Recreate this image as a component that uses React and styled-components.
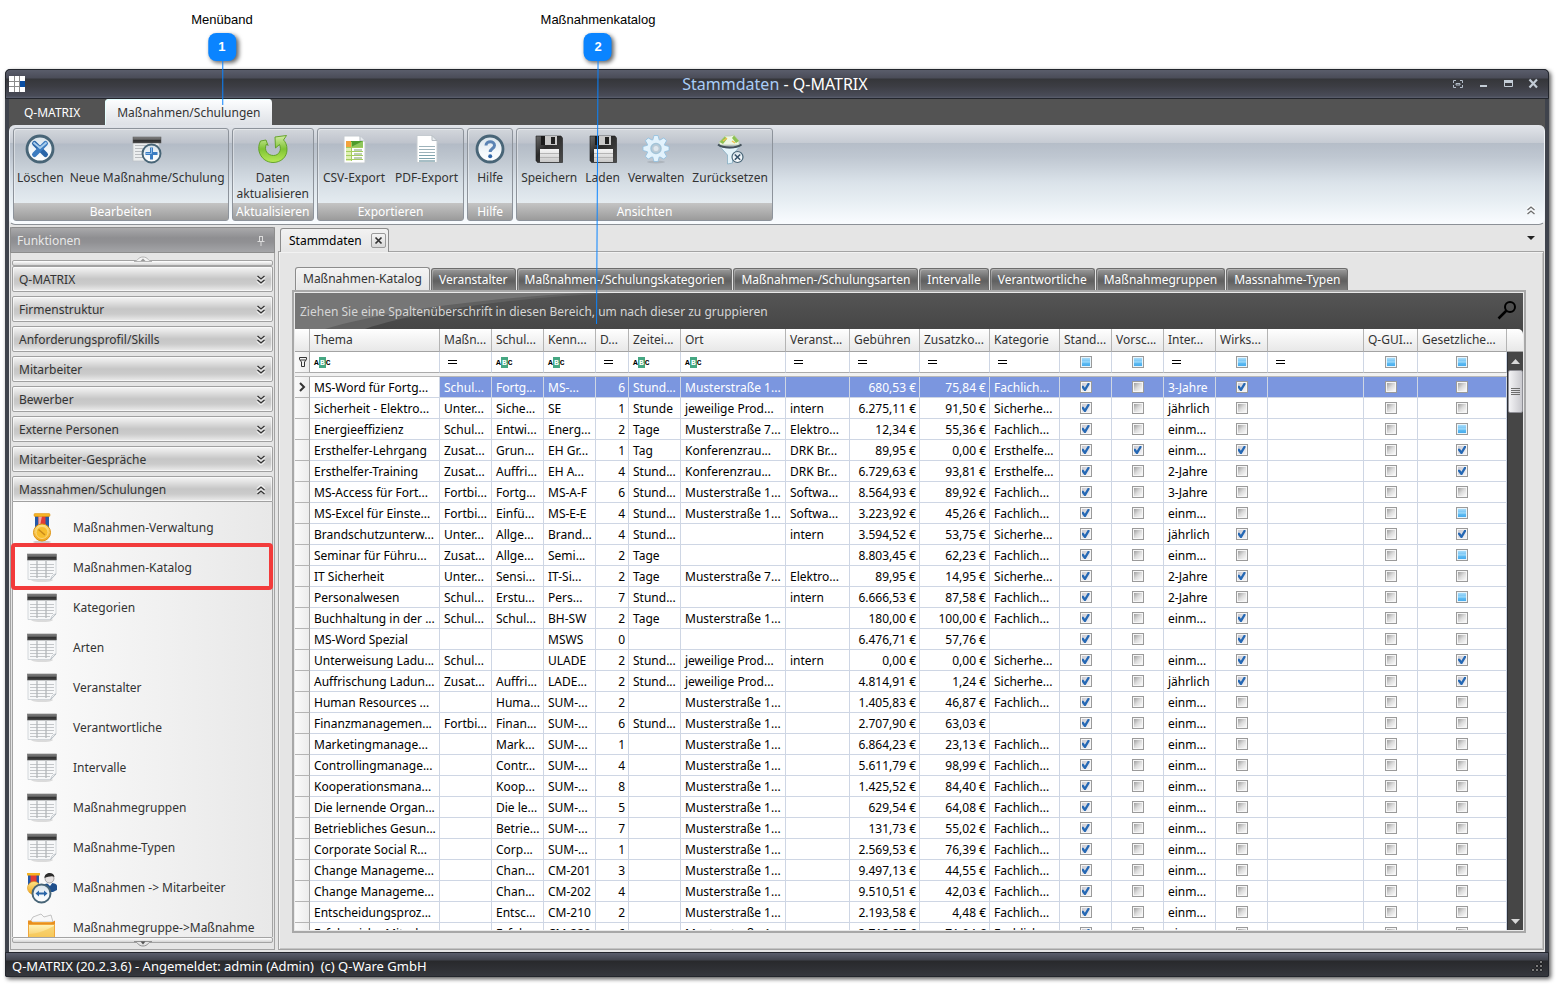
import React from 'react';
import styled, { createGlobalStyle, css } from 'styled-components';

const GlobalStyle = createGlobalStyle`
  *, *::before, *::after { box-sizing: border-box; }

  body {
    margin: 0;
    background: #ffffff;
    color: #333333;
    font-family: 'Noto Sans', 'DejaVu Sans Condensed', sans-serif;
    font-size: 12px;
    line-height: 16px;
  }

  button {
    margin: 0;
    padding: 0;
    border: 0;
    background: none;
    color: inherit;
    font: inherit;
  }
`;

/* ---------- data ---------- */

const menuGroups = [
  'Q-MATRIX',
  'Firmenstruktur',
  'Anforderungsprofil/Skills',
  'Mitarbeiter',
  'Bewerber',
  'Externe Personen',
  'Mitarbeiter-Gespräche',
];

const menuItems = [
  { label: 'Maßnahmen-Verwaltung', icon: 'medal' },
  { label: 'Maßnahmen-Katalog', icon: 'table', active: true },
  { label: 'Kategorien', icon: 'table' },
  { label: 'Arten', icon: 'table' },
  { label: 'Veranstalter', icon: 'table' },
  { label: 'Verantwortliche', icon: 'table' },
  { label: 'Intervalle', icon: 'table' },
  { label: 'Maßnahmegruppen', icon: 'table' },
  { label: 'Maßnahme-Typen', icon: 'table' },
  { label: 'Maßnahmen -> Mitarbeiter', icon: 'assign' },
  { label: 'Maßnahmegruppe->Maßnahme', icon: 'folder' },
];

const catalogTabs = [
  'Maßnahmen-Katalog',
  'Veranstalter',
  'Maßnahmen-/Schulungskategorien',
  'Maßnahmen-/Schulungsarten',
  'Intervalle',
  'Verantwortliche',
  'Maßnahmegruppen',
  'Massnahme-Typen',
];

const ribbonGroups = [
  {
    title: 'Bearbeiten',
    pad: 3,
    buttons: [
      { label: 'Löschen', icon: 'delete' },
      { label: 'Neue Maßnahme/Schulung', icon: 'add' },
    ],
  },
  { title: 'Aktualisieren', pad: 4, buttons: [{ label: 'Daten\naktualisieren', icon: 'refresh' }] },
  {
    title: 'Exportieren',
    pad: 5,
    buttons: [
      { label: 'CSV-Export', icon: 'csv' },
      { label: 'PDF-Export', icon: 'pdf' },
    ],
  },
  { title: 'Hilfe', pad: 6, buttons: [{ label: 'Hilfe', icon: 'help' }] },
  {
    title: 'Ansichten',
    pad: 4,
    buttons: [
      { label: 'Speichern', icon: 'save' },
      { label: 'Laden', icon: 'save' },
      { label: 'Verwalten', icon: 'gear' },
      { label: 'Zurücksetzen', icon: 'reset' },
    ],
  },
];

const columns = [
  { key: 'thema', label: 'Thema', width: 130, filter: 'abc' },
  { key: 'art', label: 'Maßn...', width: 52, filter: 'eq' },
  { key: 'schul', label: 'Schul...', width: 52, filter: 'abc' },
  { key: 'kenn', label: 'Kenn...', width: 52, filter: 'abc' },
  { key: 'dauer', label: 'D...', width: 33, filter: 'eq', right: true },
  { key: 'zeit', label: 'Zeitei...', width: 52, filter: 'abc' },
  { key: 'ort', label: 'Ort', width: 105, filter: 'abc' },
  { key: 'veranst', label: 'Veranst...', width: 64, filter: 'eq' },
  { key: 'geb', label: 'Gebühren', width: 70, filter: 'eq', right: true },
  { key: 'zusatz', label: 'Zusatzko...', width: 70, filter: 'eq', right: true },
  { key: 'kat', label: 'Kategorie', width: 70, filter: 'eq' },
  { key: 'stand', label: 'Stand...', width: 52, filter: 'check', check: true },
  { key: 'vorsch', label: 'Vorsc...', width: 52, filter: 'check', check: true },
  { key: 'inter', label: 'Inter...', width: 52, filter: 'eq' },
  { key: 'wirk', label: 'Wirks...', width: 52, filter: 'check', check: true },
  { key: 'leer', label: '', width: 96, filter: 'eq' },
  { key: 'qgui', label: 'Q-GUI...', width: 54, filter: 'check', check: true },
  { key: 'gesetz', label: 'Gesetzliche...', width: 89, filter: 'check', check: true },
];

const M1 = 'Musterstraße 1...';
const M7 = 'Musterstraße 7...';
const FA = 'Fachlich...';
const SI = 'Sicherhe...';

// thema, art, schul, kenn, dauer, zeit, ort, veranst, geb, zusatz, kat, inter, vorsch, wirk, gesetz
const rawRows = [
  ['MS-Word für Fortg...', 'Schul...', 'Fortg...', 'MS-...', '6', 'Stund...', M1, '', '680,53', '75,84', FA, '3-Jahre', 0, 1, 0],
  ['Sicherheit - Elektro...', 'Unter...', 'Siche...', 'SE', '1', 'Stunde', 'jeweilige Prod...', 'intern', '6.275,11', '91,50', SI, 'jährlich', 0, 0, 0],
  ['Energieeffizienz', 'Schul...', 'Entwi...', 'Energ...', '2', 'Tage', M7, 'Elektro...', '12,34', '55,36', FA, 'einm...', 0, 0, 2],
  ['Ersthelfer-Lehrgang', 'Zusat...', 'Grun...', 'EH Gr...', '1', 'Tag', 'Konferenzrau...', 'DRK Br...', '89,95', '0,00', 'Ersthelfe...', 'einm...', 1, 1, 1],
  ['Ersthelfer-Training', 'Zusat...', 'Auffri...', 'EH A...', '4', 'Stund...', 'Konferenzrau...', 'DRK Br...', '6.729,63', '93,81', 'Ersthelfe...', '2-Jahre', 0, 0, 1],
  ['MS-Access für Fort...', 'Fortbi...', 'Fortg...', 'MS-A-F', '6', 'Stund...', M1, 'Softwa...', '8.564,93', '89,92', FA, '3-Jahre', 0, 0, 0],
  ['MS-Excel für Einste...', 'Fortbi...', 'Einfü...', 'MS-E-E', '4', 'Stund...', M1, 'Softwa...', '3.223,92', '45,26', FA, 'einm...', 0, 0, 2],
  ['Brandschutzunterw...', 'Unter...', 'Allge...', 'Brand...', '4', 'Stund...', '', 'intern', '3.594,52', '53,75', SI, 'jährlich', 0, 1, 1],
  ['Seminar für Führu...', 'Zusat...', 'Allge...', 'Semi...', '2', 'Tage', '', '', '8.803,45', '62,23', FA, 'einm...', 0, 0, 2],
  ['IT Sicherheit', 'Unter...', 'Sensi...', 'IT-Si...', '2', 'Tage', M7, 'Elektro...', '89,95', '14,95', SI, '2-Jahre', 0, 1, 0],
  ['Personalwesen', 'Schul...', 'Erstu...', 'Pers...', '7', 'Stund...', '', 'intern', '6.666,53', '87,58', FA, '2-Jahre', 0, 0, 2],
  ['Buchhaltung in der ...', 'Schul...', 'Schul...', 'BH-SW', '2', 'Tage', M1, '', '180,00', '100,00', FA, 'einm...', 0, 1, 0],
  ['MS-Word Spezial', '', '', 'MSWS', '0', '', '', '', '6.476,71', '57,76', '', '', 0, 1, 0],
  ['Unterweisung Ladu...', 'Schul...', '', 'ULADE', '2', 'Stund...', 'jeweilige Prod...', 'intern', '0,00', '0,00', SI, 'einm...', 0, 1, 1],
  ['Auffrischung Ladun...', 'Zusat...', 'Auffri...', 'LADE...', '2', 'Stund...', 'jeweilige Prod...', '', '4.814,91', '1,24', SI, 'jährlich', 0, 1, 1],
  ['Human Resources ...', '', 'Huma...', 'SUM-...', '2', '', M1, '', '1.405,83', '46,87', FA, 'einm...', 0, 0, 0],
  ['Finanzmanagemen...', 'Fortbi...', 'Finan...', 'SUM-...', '6', 'Stund...', M1, '', '2.707,90', '63,03', '', 'einm...', 0, 0, 0],
  ['Marketingmanage...', '', 'Mark...', 'SUM-...', '1', '', M1, '', '6.864,23', '23,13', FA, 'einm...', 0, 0, 0],
  ['Controllingmanage...', '', 'Contr...', 'SUM-...', '4', '', M1, '', '5.611,79', '98,99', FA, 'einm...', 0, 0, 0],
  ['Kooperationsmana...', '', 'Koop...', 'SUM-...', '8', '', M1, '', '1.425,52', '84,40', FA, 'einm...', 0, 0, 0],
  ['Die lernende Organ...', '', 'Die le...', 'SUM-...', '5', '', M1, '', '629,54', '64,08', FA, 'einm...', 0, 0, 0],
  ['Betriebliches Gesun...', '', 'Betrie...', 'SUM-...', '7', '', M1, '', '131,73', '55,02', FA, 'einm...', 0, 0, 0],
  ['Corporate Social R...', '', 'Corp...', 'SUM-...', '1', '', M1, '', '2.569,53', '76,39', FA, 'einm...', 0, 0, 0],
  ['Change Manageme...', '', 'Chan...', 'CM-201', '3', '', M1, '', '9.497,13', '44,55', FA, 'einm...', 0, 0, 0],
  ['Change Manageme...', '', 'Chan...', 'CM-202', '4', '', M1, '', '9.510,51', '42,03', FA, 'einm...', 0, 0, 0],
  ['Entscheidungsproz...', '', 'Entsc...', 'CM-210', '2', '', M1, '', '2.193,58', '4,48', FA, 'einm...', 0, 0, 0],
  ['Erfolgreiche Mitarb...', '', 'Erfol...', 'CM-220', '6', '', M1, '', '3.713,87', '71,94', FA, 'einm...', 0, 0, 0],
];

const rows = rawRows.map((r) => ({
  thema: r[0],
  art: r[1],
  schul: r[2],
  kenn: r[3],
  dauer: r[4],
  zeit: r[5],
  ort: r[6],
  veranst: r[7],
  geb: `${r[8]} €`,
  zusatz: `${r[9]} €`,
  kat: r[10],
  inter: r[11],
  stand: 1,
  vorsch: r[12],
  wirk: r[13],
  leer: '',
  qgui: 0,
  gesetz: r[14],
}));

/* ---------- page and callouts ---------- */

const Page = styled.div`
  position: relative;
  display: flex;
  flex-direction: column;
  height: 100vh;
  min-height: 600px;
  padding: 69px 9px 10px 5px;
`;

const Callout = styled.div`
  position: absolute;
  z-index: 5;
  top: 12px;
  left: ${(p) => p.$x}px;
  display: flex;
  flex-direction: column;
  align-items: center;
  gap: 5px;
  transform: translateX(-50%);
  color: #000000;
  font: 13px/16px 'Liberation Sans', Arial, sans-serif;
  pointer-events: none;
`;

const CalloutBadge = styled.span`
  width: 28px;
  height: 28px;
  border-radius: 8px;
  background: #0a84ff;
  box-shadow: 2px 2px 4px rgba(0, 0, 0, 0.6);
  color: #ffffff;
  font-weight: bold;
  line-height: 28px;
  text-align: center;
`;

const CalloutLine = styled.svg`
  position: absolute;
  top: 49px;
  left: 50%;
  width: 4px;
  margin-left: -2px;
`;

/* ---------- window ---------- */

const Window = styled.div`
  flex: 1;
  min-height: 0;
  display: flex;
  flex-direction: column;
  border-radius: 5px 5px 2px 2px;
  background: #3f434c;
  box-shadow: 2px 2px 4px rgba(0, 0, 0, 0.65);
`;

const TitleBar = styled.header`
  display: grid;
  grid-template-columns: 100px 1fr 100px;
  align-items: center;
  height: 30px;
  padding: 0 7px 0 3px;
  border: 1px solid #23262d;
  border-radius: 5px 5px 0 0;
  background: linear-gradient(#5a5d6b 0, #4a4c58 8px, #35363a 9px, #3c3d43 16px, #494c58 26px, #5c6070 28px);
`;

const WindowTitle = styled.h1`
  margin: 0;
  color: #ffffff;
  font-size: 16px;
  font-weight: normal;
  line-height: 20px;
  text-align: center;

  span { color: #a9cdf7; }
`;

const WindowButtons = styled.div`
  display: flex;
  justify-content: flex-end;
  gap: 9px;

  button {
    width: 16px;
    height: 16px;
  }

  svg { display: block; }
`;

const RibbonTabs = styled.nav`
  display: flex;
  align-items: flex-end;
  height: 26px;
  margin: 0 4px;
  background: #535353;
`;

const RibbonTab = styled.button`
  height: 26px;
  padding: ${(p) => (p.$active ? '2px 12px 0' : '2px 25px 0 15px')};
  border-radius: 4px 4px 0 0;
  color: #ffffff;

  ${(p) =>
    p.$active &&
    css`
      background: linear-gradient(#fdfeff, #dee1e6);
      box-shadow: inset 1px 1px 0 #e4ffff;
      color: #333333;
    `}
`;

const Body = styled.div`
  flex: 1;
  min-height: 0;
  display: flex;
  flex-direction: column;
  margin: 0 4px;
  background: #e5e5e5;
`;

/* ---------- ribbon ---------- */

const RibbonBack = styled.div`
  background: linear-gradient(#535353 60px, #e5e5e5 60px);
`;

const Ribbon = styled.div`
  display: flex;
  gap: 3px;
  height: 100px;
  padding: 3px 7px 3px 3px;
  border: 1px solid #eef2f6;
  border-top: 0;
  border-bottom: 1px solid #8c9197;
  border-radius: 6px;
  background: linear-gradient(
    #e2e5ea 0,
    #c6cbd3 18px,
    #b5bdc8 18px,
    #bfc7d1 32px,
    #dbe3ea 58px,
    #e7eef3 76px,
    #f8fbfe 97px
  );
`;

const RibbonGroup = styled.section`
  display: flex;
  flex-direction: column;
  height: 93px;
  border: 1px solid #8d939b;
  border-radius: 3px;
  background: linear-gradient(
    #d3d7dc 0,
    #bec3cc 14px,
    #b3bbc6 15px,
    #bdc5ce 28px,
    #d6dee5 54px,
    #e4ebf0 74px
  );
  box-shadow: inset 1px 1px 0 rgba(255, 255, 255, 0.4);
`;

const RibbonButtons = styled.div`
  flex: 1;
  display: flex;
  padding-top: 4px;
`;

const RibbonButton = styled.button`
  display: flex;
  flex-direction: column;
  align-items: center;
  gap: 5px;
  padding: 0 ${(p) => p.$pad}px;
  white-space: pre-line;

  svg { flex: none; }
`;

const RibbonCaption = styled.h2`
  margin: 0;
  height: 17px;
  background: linear-gradient(#c4c4c4, #9b9b9b);
  color: #ffffff;
  font-size: 12px;
  font-weight: normal;
  line-height: 17px;
  text-align: center;
`;

const RibbonCollapse = styled.button`
  align-self: flex-end;
  width: 12px;
  height: 20px;
  margin-left: auto;
`;

/* ---------- side bar ---------- */

const Workspace = styled.div`
  flex: 1;
  min-height: 0;
  display: flex;
  gap: 3px;
  padding: 2px 1px 2px 1px;
`;

const Sidebar = styled.aside`
  flex: none;
  width: 265px;
  display: flex;
  flex-direction: column;
  border: 1px solid #a3a3a3;
  border-top: 0;
`;

const SidebarHead = styled.div`
  display: flex;
  align-items: center;
  justify-content: space-between;
  height: 26px;
  margin: 0 -1px;
  padding: 2px 9px 0 6px;
  border: 1px solid #8d8d8d;
  border-radius: 2px 2px 0 0;
  background: linear-gradient(#a9a9ab 0, #8e8e91 10px, #909093 14px, #a6a7aa 25px);
  color: #e8e8e8;
`;

const SidebarBody = styled.div`
  flex: 1;
  min-height: 0;
  display: flex;
  flex-direction: column;
  padding: 7px 1px 6px;
`;

const ScrollStrip = styled.button`
  position: relative;
  flex: none;
  height: 6px;
  border: 1px solid #a3a3a3;
  border-radius: 2px;
  background: linear-gradient(#ffffff, #d4d4d4);

  svg {
    position: absolute;
    left: 50%;
    margin-left: -9px;
    ${(p) => (p.$down ? 'top: 3px;' : 'bottom: 3px;')}
  }
`;

const GroupHead = styled.button`
  flex: none;
  display: flex;
  align-items: center;
  justify-content: space-between;
  height: 26px;
  margin-bottom: ${(p) => (p.$open ? 0 : 4)}px;
  padding: 2px 6px 0;
  border: 1px solid #a0a0a0;
  border-radius: ${(p) => (p.$open ? '2px 2px 0 0' : '2px')};
  background: linear-gradient(#f4f4f4 0, #e2e2e2 5px, #c6c6c6 12px, #cbcbcb 17px, #ececec 24px);
  box-shadow: inset 0 0 0 1px rgba(255, 255, 255, 0.6);
`;

const ItemList = styled.ul`
  flex: 1;
  min-height: 0;
  margin: 0;
  padding: 6px 0 0;
  overflow-x: visible;
  overflow-y: clip;
  border: 1px solid #a3a3a3;
  border-width: 0 1px;
  background: linear-gradient(90deg, #fcfcfc, #e8e8e8);
  list-style: none;
`;

const Item = styled.li`
  position: relative;
  height: 40px;

  a {
    display: flex;
    align-items: center;
    gap: 15px;
    height: 40px;
    padding: 0 13px;
    color: #333333;
    text-decoration: none;
    white-space: nowrap;
  }
`;

const Marker = styled.span`
  position: absolute;
  z-index: 1;
  inset: -5px -1px -2px -2px;
  border: 4px solid #f23b3b;
  border-radius: 4px;
`;

/* ---------- document area ---------- */

const Main = styled.main`
  flex: 1;
  min-width: 0;
  display: flex;
  flex-direction: column;
`;

const DocTabs = styled.div`
  flex: none;
  display: flex;
  align-items: flex-start;
  justify-content: space-between;
  height: 24px;
  padding: 0 9px 0 2px;
`;

const DocTab = styled.div`
  position: relative;
  z-index: 1;
  align-self: flex-end;
  display: flex;
  align-items: center;
  gap: 9px;
  height: 24px;
  margin-bottom: -1px;
  padding: 0 2px 0 8px;
  border: 1px solid #8c8c8c;
  border-bottom: 0;
  border-radius: 3px 3px 0 0;
  background: linear-gradient(#f2f2f2, #e5e5e5);
  color: #000000;

  button {
    width: 15px;
    height: 15px;
    border: 1px solid #9a9a9a;
    border-radius: 2px;
    background: linear-gradient(#f4f4f4, #d8d8d8);
  }

  svg { display: block; margin: 2px; }
`;

const WindowList = styled.button`
  padding-top: 9px;

  svg { display: block; }
`;

const DocFrame = styled.div`
  flex: 1;
  min-height: 0;
  display: flex;
  flex-direction: column;
  padding: 15px 17px 16px 13px;
  border: 1px solid #a3a3a3;
  box-shadow: inset 1px 1px 0 #f2f2f2, inset -1px -1px 0 #c4c4c4;
`;

const CatalogTabs = styled.div`
  flex: none;
  display: flex;
  align-items: flex-end;
  gap: 1px;
  padding-left: 3px;
`;

const CatalogTab = styled.button`
  height: 22px;
  padding: 0 7px;
  border: 1px solid #6d6d6d;
  border-bottom: 0;
  border-radius: 3px 3px 0 0;
  background: linear-gradient(#9c9c9c, #6a6a6a 9px, #606060 12px, #7d7d7d);
  box-shadow: inset 1px 1px 0 rgba(255, 255, 255, 0.25);
  color: #ffffff;
  white-space: nowrap;

  ${(p) =>
    p.$active &&
    css`
      height: 23px;
      border-color: #8c8c8c;
      background: linear-gradient(#f4f4f4, #e5e5e5);
      color: #333333;
    `}
`;

const GridFrame = styled.div`
  flex: 1;
  min-height: 0;
  display: flex;
  flex-direction: column;
  border: 2px solid #a8a8a8;
  padding: 1px;
  background: #e9e9e9;
`;

const GroupPanel = styled.div`
  position: relative;
  flex: none;
  display: flex;
  align-items: center;
  justify-content: space-between;
  height: 36px;
  padding: 2px 6px 0 5px;
  overflow: hidden;
  background: linear-gradient(#555555, #464646);
  color: #d6d6d6;

  span { position: relative; }
`;

const Swoosh = styled.svg`
  position: absolute;
  inset: 0 auto 0 0;
`;

const GridArea = styled.div`
  flex: 1;
  min-height: 0;
  display: flex;
  background: #464646;
`;

const GridScroll = styled.div`
  flex: 1;
  min-width: 0;
  overflow: hidden;
  background: #ffffff;
`;

const Table = styled.table`
  width: 100%;
  table-layout: fixed;
  border-collapse: separate;
  border-spacing: 0;
  color: #000000;
`;

const HeadCell = styled.th`
  height: 23px;
  padding: 0 0 0 4px;
  border-right: 1px solid #b4b4b4;
  border-bottom: 1px solid #a3a3a3;
  background: linear-gradient(#ffffff, #f4f4f4 10px, #e8e8e8);
  color: #333333;
  font-weight: normal;
  text-align: left;
  white-space: nowrap;
  overflow: hidden;
`;

const FilterCell = styled.td`
  height: 21px;
  padding: 0 0 0 ${(p) => ({ abc: 4, eq: 8 }[p.$type] || 0)}px;
  border-right: 1px solid #ced6e4;
  border-bottom: 1px solid #ababab;
`;

const GapCell = styled.td`
  height: 4px;
  padding: 0;
  border-bottom: 1px solid #b9b9b9;
  background: #f1f1f1;
`;

const Cell = styled.td`
  height: 21px;
  padding: ${(p) => (p.$check ? '0' : '2px 3px 0 4px')};
  border-right: 1px solid #ced6e4;
  border-bottom: 1px solid #ced6e4;
  overflow: hidden;
  text-align: ${(p) => (p.$right ? 'right' : 'left')};
  white-space: nowrap;

  ${(p) =>
    p.$selected &&
    css`
      background: #7b96df;
      color: #ffffff;
    `}
`;

const HandleCell = styled.td`
  height: 21px;
  padding: 0 0 0 4px;
  border-right: 1px solid #a3a3a3;
  border-bottom: 1px solid #b4b4b4;
  background: linear-gradient(90deg, #fafafa, #ececec);

  svg { display: block; }
`;

const CheckBox = styled.input.attrs({ type: 'checkbox' })`
  appearance: none;
  display: block;
  width: 12px;
  height: 12px;
  margin: 0 auto;
  padding: 1px;
  border: 1px solid #9a9a9a;
  background:
    linear-gradient(135deg, #9f9f9f, #dcdcdc 50%, #fafafa) content-box,
    #f6f6f6;

  &:checked {
    background:
      linear-gradient(135deg, #c9c9d0, #f4f4f8) content-box,
      #f6f6f6;
  }

  &:checked::before {
    content: '';
    display: block;
    width: 8px;
    height: 8px;
    background: #2568b4;
    clip-path: polygon(0 35%, 25% 35%, 42% 58%, 78% 0, 100% 0, 100% 18%, 52% 100%, 35% 100%, 0 52%);
  }

  &:indeterminate {
    background:
      linear-gradient(#a6dbf9 0, #7cc8f6 3px, #a9e0fb 4px, #5fbcf3 5px, #48abec 8px) content-box,
      #e8f5fc;
  }
`;

const Abc = styled.span`
  display: flex;
  align-items: center;
  height: 12px;
  font: bold 8px/11px 'Liberation Mono', monospace;

  b {
    width: 7px;
    height: 11px;
    background: #46a782;
    color: #ffffff;
    text-align: center;
  }
`;

const ScrollBar = styled.div`
  flex: none;
  width: 16px;
  display: flex;
  flex-direction: column;
  border-left: 1px solid #2d3036;
  background: #464646;
`;

const ScrollCorner = styled.div`
  height: 23px;
  margin-left: -1px;
  border-bottom: 1px solid #a3a3a3;
  border-radius: 0 5px 0 0;
  background: linear-gradient(#ffffff, #e8e8e8);
`;

const ScrollArrow = styled.button`
  height: 18px;

  svg { display: block; margin: 0 auto; }
`;

const ScrollThumb = styled.div`
  display: grid;
  place-items: center;
  height: 43px;
  margin-bottom: auto;
  border: 1px solid #8f8f95;
  border-radius: 2px;
  background: linear-gradient(90deg, #f3f3f5, #c9c9ce);
`;

/* ---------- status bar ---------- */

const StatusBar = styled.footer`
  flex: none;
  display: flex;
  align-items: center;
  justify-content: space-between;
  height: 25px;
  padding: 2px 5px 0 6px;
  border: 1px solid #23262d;
  border-radius: 0 0 2px 2px;
  background: linear-gradient(#5a5e6c 0, #40434c 7px, #28292c 8px, #35373d 23px);
  color: #ffffff;
  font-size: 13px;
  white-space: pre;
`;

/* ---------- icons ---------- */

const Lens = ({ cx = 16, cy = 16, r = 13, children }) => (
  <>
    <circle cx={cx} cy={cy} r={r} fill="url(#lensFill)" stroke="#486577" strokeWidth={r / 4.6} />
    {children}
  </>
);

const TableSheet = () => (
  <>
    <ellipse cx="16" cy="28" rx="11" ry="2" fill="#000000" opacity="0.12" />
    <path d="M2 8H30V22L25 27.500H2Z" fill="#f7f8f9" stroke="#c9ced3" strokeWidth="0.800" />
    <rect x="1.500" y="2" width="29" height="6" fill="url(#sheetHead)" stroke="#5d5d5d" strokeWidth="0.500" />
    <path d="M4 12.500H28M4 15.500H28M4 18.500H28M4 21.500H27M4 24.500H24" stroke="#c3c6c9" />
    <path d="M11 9V26M20 9V26" stroke="#b3b6b9" strokeWidth="1.300" />
    <path d="M24.500 27.500C26 25 25 23 30 22Z" fill="#ffffff" stroke="#aeb6bd" strokeWidth="0.800" />
  </>
);

const Medal = () => (
  <>
    <ellipse cx="16" cy="30" rx="9" ry="1.500" fill="#000000" opacity="0.18" />
    <path d="M9 3H23V16H9Z" fill="#2458a8" />
    <path d="M12.500 4H19.500V15H12.500Z" fill="#e23b35" />
    <path d="M12.500 4H16L14 14H12.500Z" fill="#f3a59f" />
    <rect x="8" y="1.500" width="16" height="3" rx="1" fill="#f5b324" stroke="#d98e0c" strokeWidth="0.500" />
    <circle cx="16" cy="20.500" r="8.500" fill="url(#gold)" stroke="#dd930f" />
    <circle cx="16" cy="20.500" r="6" fill="#f7bd2d" stroke="#fbe089" strokeWidth="0.800" />
    <path d="M12.500 17.500L19 23" stroke="#c98a1a" strokeWidth="1.600" />
  </>
);

const icons = {
  delete: (
    <Lens>
      <path d="M10.500 10.500L21.500 21.500" stroke="#2a66a8" strokeWidth="5" strokeLinecap="round" />
      <path d="M21.500 10.500L10.500 21.500" stroke="#3c7cc0" strokeWidth="5" strokeLinecap="round" />
      <path d="M9.500 9.500L16 15L22.500 9.500" fill="none" stroke="#a8cdec" strokeWidth="2" />
    </Lens>
  ),
  add: (
    <>
      <rect x="2" y="9" width="26" height="19" fill="#eceeef" stroke="#bfc3c7" strokeWidth="0.800" />
      <path d="M4 12.500H27M4 15.500H27M4 18.500H27M4 21.500H27M4 24.500H27" stroke="#b9bcbf" />
      <rect x="2" y="4" width="28" height="6" fill="url(#sheetHead)" stroke="#555555" strokeWidth="0.500" />
      <Lens cx={20.5} cy={20.5} r={9}>
        <path d="M20.500 14.500V26.500M14.500 20.500H26.500" stroke="#3a7cc2" strokeWidth="3" />
        <path d="M20.500 15V20.500H15" fill="none" stroke="#8fbce6" strokeWidth="1" />
      </Lens>
    </>
  ),
  refresh: (
    <path
      d="M9 7L3.500 8C1.500 12 1.500 15 2 18C3.500 25 9.500 29.500 16 29.500C24 29.500 30 24 30 16.500C30 12 28.500 9 26.500 7L29.500 2.500L18 4L18.500 15L22.500 11.500C25 17 22 22.500 16.500 22.500C10.500 22.500 6.500 17 9.500 11L11 12.500Z"
      fill="url(#green)"
      stroke="#5c9e20"
      strokeWidth="0.900"
    />
  ),
  csv: (
    <>
      <path d="M6 3H22L27 8V30H6Z" fill="#ffffff" stroke="#c5cbd0" />
      <path d="M22 3V8H27" fill="#e8ecef" stroke="#b5bcc2" />
      <rect x="8" y="8" width="5" height="6" fill="#f3a33c" />
      <rect x="13" y="8" width="12" height="6" fill="#4f9b2c" />
      <path d="M13 14L25 8V14Z" fill="#8fc65c" />
      <path d="M8 14H13V28H8Z" fill="#dff0b2" />
      <path d="M8 14.500H25M8 18.500H25M8 22.500H25M8 26.500H25M13.500 9V28" stroke="#a4cd5e" />
      <path d="M16 17H24M16 21H24M16 25H24" stroke="#7d9b6c" />
    </>
  ),
  pdf: (
    <>
      <path d="M6 2.500H21L26 7.500V29.500H6Z" fill="#ffffff" stroke="#c5cbd0" />
      <path d="M21 2.500V7.500H26Z" fill="#e8ecef" stroke="#b5bcc2" />
      <path d="M8 13.500H24M8 16.500H24M8 19.500H24M8 22.500H24M8 25.500H24M8 28H24" stroke="#9eb3bb" />
      <path d="M8 22.500H24M8 25.500H24M8 28H24" stroke="#7fa3ad" />
    </>
  ),
  help: (
    <Lens>
      <path
        d="M12 12.500C12 7.500 20.500 7.500 20.500 12.500C20.500 15.500 16.200 15.500 16.200 19"
        fill="none"
        stroke="#5a83b4"
        strokeWidth="3"
      />
      <circle cx="16.200" cy="23.200" r="2" fill="#2f66a8" />
    </Lens>
  ),
  save: (
    <>
      <path d="M3 3H28L29.500 5V29.500H4.500L3 27.500Z" fill="url(#disk)" stroke="#1d1d1d" strokeWidth="0.600" />
      <rect x="8" y="3" width="16" height="9" fill="#c9c9c9" />
      <rect x="8" y="3" width="4" height="9" fill="#1b1b1b" />
      <rect x="18" y="4" width="4" height="7" fill="#222222" />
      <rect x="7" y="16" width="19" height="13" fill="url(#label)" />
      <path d="M7 20.500H26M7 24.500H26" stroke="#b5b5b5" />
    </>
  ),
  gear: (
    <>
      <ellipse cx="16" cy="29" rx="9" ry="1.500" fill="#000000" opacity="0.1" />
      {[0, 45, 90, 135, 180, 225, 270, 315].map((a) => (
        <path key={a} d="M12.500 8L14 2.500H18L19.500 8Z" fill="#e3f3fd" stroke="#8fbfe0" strokeWidth="0.800" transform={`rotate(${a} 16 15.500)`} />
      ))}
      <circle cx="16" cy="15.500" r="9" fill="#e2f2fc" />
      <circle cx="16" cy="15.500" r="5" fill="#bccbd6" stroke="#a3c4d8" strokeWidth="1.500" />
      <circle cx="16" cy="15.500" r="2.500" fill="#dfe7ed" />
    </>
  ),
  reset: (
    <>
      <path d="M5 9L11 3H16L20 2L25 8V12H6Z" fill="#eef6e4" stroke="#b5c7ac" strokeWidth="0.800" />
      <path d="M11 3.500L5.500 9L9 11L13 6ZM20 2.500L25 8L22 10L18 5Z" fill="#8cc152" />
      <path d="M9 8L13 5M18 8L21 10" stroke="#f2c14c" strokeWidth="1.500" />
      <path d="M4.500 12C10 16 22 16 27 12L18.500 22V30L13.500 31V22Z" fill="#e4f3fa" stroke="#86adc2" strokeWidth="0.800" />
      <path d="M4 11.500C9 15.500 22 15.500 27.500 11.500" fill="none" stroke="#44515a" strokeWidth="2" />
      <Lens cx={23.5} cy={24} r={5.5}>
        <path d="M20.800 21.500L26.200 26.800M26.200 21.500L20.800 26.800" stroke="#38536b" strokeWidth="1.600" />
      </Lens>
    </>
  ),
  table: <TableSheet />,
  medal: <Medal />,
  assign: (
    <>
      <rect x="2" y="2" width="11" height="11" fill="#2458a8" />
      <rect x="4.500" y="3" width="6" height="9" fill="#e23b35" />
      <rect x="1" y="1" width="13" height="2.500" fill="#f5b324" />
      <circle cx="8" cy="16" r="6.500" fill="url(#gold)" stroke="#dd930f" strokeWidth="0.600" />
      <path d="M15 17C15 10 31 9 31 14V18L27 20H17Z" fill="#1f4f8c" />
      <path d="M21 11L24 14L27 10Z" fill="#ffffff" />
      <circle cx="23.500" cy="6.500" r="4.500" fill="#e6e2e2" stroke="#777777" strokeWidth="0.600" />
      <path d="M18.500 6C18 0 28 -1 28.500 5C26 3.500 22 5 18.500 6Z" fill="#2d2d2d" />
      <Lens cx={15.5} cy={21.5} r={9}>
        <path d="M9.500 21.500L13 18.500V20.500H18V18.500L21.500 21.500L18 24.500V22.500H13V24.500Z" fill="#2a66a8" />
      </Lens>
    </>
  ),
  folder: (
    <>
      <path d="M4 10L7 5L15 2L18 5L25 3L27 10Z" fill="#f8f8f8" stroke="#b5b5b5" strokeWidth="0.800" />
      <path d="M2 10H29V30H2Z" fill="#f0a63a" />
      <path d="M2 8.500H5L7 11H25L29 8.500V12H2Z" fill="#e88f1f" />
      <path d="M3 13H28V31H3Z" fill="url(#folder)" />
      <path d="M3 22C12 22 20 18 28 14V31H3Z" fill="#f5c451" opacity="0.6" />
    </>
  ),
};

const IconDefs = () => (
  <svg width="0" height="0" style={{ position: 'absolute' }} aria-hidden="true">
    <defs>
      <linearGradient id="lensFill" x1="0" y1="0" x2="0" y2="1">
        <stop offset="0" stopColor="#d7e2ea" />
        <stop offset="0.600" stopColor="#f3f8fb" />
        <stop offset="1" stopColor="#ffffff" />
      </linearGradient>
      <linearGradient id="sheetHead" x1="0" y1="0" x2="0" y2="1">
        <stop offset="0" stopColor="#8b8b8b" />
        <stop offset="0.450" stopColor="#5a5a5a" />
        <stop offset="0.500" stopColor="#2e2e2e" />
        <stop offset="1" stopColor="#444444" />
      </linearGradient>
      <linearGradient id="gold" x1="0" y1="0" x2="0" y2="1">
        <stop offset="0" stopColor="#fde48b" />
        <stop offset="1" stopColor="#f0a41b" />
      </linearGradient>
      <linearGradient id="green" x1="0" y1="0" x2="0" y2="1">
        <stop offset="0" stopColor="#d3eca6" />
        <stop offset="0.500" stopColor="#7fc334" />
        <stop offset="1" stopColor="#b8ea58" />
      </linearGradient>
      <linearGradient id="disk" x1="0" y1="0" x2="1" y2="1">
        <stop offset="0" stopColor="#6a6a6a" />
        <stop offset="0.400" stopColor="#2b2b2b" />
        <stop offset="1" stopColor="#4c4c4c" />
      </linearGradient>
      <linearGradient id="label" x1="0" y1="0" x2="0" y2="1">
        <stop offset="0" stopColor="#f6f6f6" />
        <stop offset="1" stopColor="#c8c8c8" />
      </linearGradient>
      <linearGradient id="folder" x1="0" y1="0" x2="0" y2="1">
        <stop offset="0" stopColor="#fff3b8" />
        <stop offset="1" stopColor="#f4b93d" />
      </linearGradient>
    </defs>
  </svg>
);

const Icon = ({ name, size = 32 }) => (
  <svg width={size} height={size} viewBox="0 0 32 32" aria-hidden="true">
    {icons[name]}
  </svg>
);

const Chevrons = ({ up, light }) => (
  <svg width="10" height="10" viewBox="0 0 10 10" aria-hidden="true">
    <g transform={up ? 'rotate(180 5 5)' : undefined} fill="none">
      <path d="M1 2L5 5.500L9 2M1 6L5 9.500L9 6" stroke="#ffffff" strokeWidth="2" opacity="0.6" />
      <path d="M1.500 1L5 4L8.500 1M1.500 5L5 8L8.500 5" stroke={light ? '#6d6d6d' : '#333333'} strokeWidth="1.300" />
    </g>
  </svg>
);

/* ---------- parts ---------- */

const GridCheck = ({ state, label }) => (
  <CheckBox
    aria-label={label}
    defaultChecked={state === 1}
    ref={(el) => {
      if (el) el.indeterminate = state === 2;
    }}
  />
);

const FilterIcon = ({ column }) => {
  if (column.filter === 'abc') {
    return (
      <Abc>
        A<b>B</b>C
      </Abc>
    );
  }
  if (column.filter === 'eq') {
    return (
      <svg width="9" height="4" style={{ display: 'block' }} aria-hidden="true">
        <path d="M0 0.500H9M0 3.500H9" stroke="#000000" />
      </svg>
    );
  }
  return <GridCheck state={2} label={`Filter ${column.label}`} />;
};

const SideMenu = () => (
  <Sidebar>
    <SidebarHead>
      Funktionen
      <svg width="8" height="10" viewBox="0 0 8 10" aria-hidden="true">
        <path d="M2.500 0.500V5.500M5.500 0.500V5.500M2 0.500H6M0.500 5.500H7.500M4 6V10" fill="none" stroke="#dcdcdc" />
      </svg>
    </SidebarHead>
    <SidebarBody>
      <ScrollStrip aria-label="Nach oben">
        <svg width="18" height="6" viewBox="0 0 18 6">
          <path d="M0 5.500C4 5 4 1 9 1S14 5 18 5.500Z" fill="#f4f4f4" stroke="#b4b4b4" />
          <path d="M6.500 5L9 2.500L11.500 5Z" fill="#999999" />
        </svg>
      </ScrollStrip>
      {menuGroups.map((group) => (
        <GroupHead key={group}>
          {group}
          <Chevrons />
        </GroupHead>
      ))}
      <GroupHead $open>
        Massnahmen/Schulungen
        <Chevrons up />
      </GroupHead>
      <ItemList>
        {menuItems.map((item) => (
          <Item key={item.label}>
            <a href="#item">
              <Icon name={item.icon} />
              {item.label}
            </a>
            {item.active && <Marker />}
          </Item>
        ))}
      </ItemList>
      <ScrollStrip $down aria-label="Nach unten">
        <svg width="18" height="6" viewBox="0 0 18 6">
          <path d="M0 0.500C4 1 4 5 9 5S14 1 18 0.500Z" fill="#e4e4e4" stroke="#8f8f8f" />
          <path d="M6.500 0.500L9 3.500L11.500 0.500Z" fill="#555555" />
        </svg>
      </ScrollStrip>
    </SidebarBody>
  </Sidebar>
);

const CatalogTable = () => (
  <Table>
    <colgroup>
      <col style={{ width: 15 }} />
      {columns.map((c) => (
        <col key={c.key} style={{ width: c.width }} />
      ))}
    </colgroup>
    <thead>
      <tr>
        <HeadCell aria-label="Zeile" />
        {columns.map((c) => (
          <HeadCell key={c.key} scope="col">
            {c.label}
          </HeadCell>
        ))}
      </tr>
      <tr>
        <HandleCell>
          <svg width="8" height="10" viewBox="0 0 8 10" aria-hidden="true">
            <path d="M0.500 0.500H7.500V2.500L5.500 5V9.500H2.500V5L0.500 2.500ZM1 3H7" fill="none" stroke="#333333" />
          </svg>
        </HandleCell>
        {columns.map((c) => (
          <FilterCell key={c.key} $type={c.filter}>
            <FilterIcon column={c} />
          </FilterCell>
        ))}
      </tr>
      <tr>
        <GapCell colSpan={columns.length + 1} />
      </tr>
    </thead>
    <tbody>
      {rows.map((row, i) => (
        <tr key={row.thema + row.kenn}>
          <HandleCell>
            {i === 0 && (
              <svg width="7" height="10" viewBox="0 0 7 10" aria-hidden="true">
                <path d="M1 1L5 5L1 9" fill="none" stroke="#333333" strokeWidth="2" />
              </svg>
            )}
          </HandleCell>
          {columns.map((c) => (
            <Cell key={c.key} $right={c.right} $check={c.check} $selected={i === 0 && c.key !== 'thema'}>
              {c.check ? <GridCheck state={row[c.key]} label={`${c.label} ${row.thema}`} /> : row[c.key]}
            </Cell>
          ))}
        </tr>
      ))}
    </tbody>
  </Table>
);

const App = () => (
  <Page>
    <GlobalStyle />
    <IconDefs />

    <Callout $x={222}>
      Menüband
      <CalloutLine height="44">
        <path d="M2.500 0V44" stroke="#0a84ff" />
      </CalloutLine>
      <CalloutBadge>1</CalloutBadge>
    </Callout>
    <Callout $x={598}>
      Maßnahmenkatalog
      <CalloutLine height="263">
        <path d="M2.500 0L1 263" stroke="#0a84ff" />
      </CalloutLine>
      <CalloutBadge>2</CalloutBadge>
    </Callout>

    <Window>
      <TitleBar>
        <svg width="16" height="16" viewBox="0 0 16 16" aria-hidden="true">
          <rect width="16" height="16" fill="#ffffff" />
          <path d="M5.500 0V16M10.500 0V16M0 5.500H16M0 10.500H16" stroke="#8a8a8a" />
          <rect x="11" y="5" width="5" height="6" fill="#0b4ea2" />
        </svg>
        <WindowTitle>
          <span>Stammdaten</span> - Q-MATRIX
        </WindowTitle>
        <WindowButtons>
          <button aria-label="Vollbild">
            <svg width="16" height="16" fill="none" stroke="#b3bdc9">
              <path d="M3.500 7V4.500H6M10 4.500H12.500V7M12.500 9V11.500H10M6 11.500H3.500V9M6 7.500H10V9H6Z" />
            </svg>
          </button>
          <button aria-label="Minimieren">
            <svg width="16" height="16">
              <rect x="5" y="9" width="7" height="2" fill="#c3ccd6" />
            </svg>
          </button>
          <button aria-label="Maximieren">
            <svg width="16" height="16">
              <path d="M4.500 5V10.500H12.500V5" fill="none" stroke="#c3ccd6" />
              <rect x="4" y="4" width="9" height="3" fill="#c3ccd6" />
            </svg>
          </button>
          <button aria-label="Schließen">
            <svg width="16" height="16">
              <path d="M4.500 3.500L12 11.500M12 3.500L4.500 11.500" stroke="#c3ccd6" strokeWidth="2.200" />
            </svg>
          </button>
        </WindowButtons>
      </TitleBar>

      <RibbonTabs>
        <RibbonTab>Q-MATRIX</RibbonTab>
        <RibbonTab $active>Maßnahmen/Schulungen</RibbonTab>
      </RibbonTabs>

      <Body>
        <RibbonBack>
          <Ribbon>
            {ribbonGroups.map((group) => (
              <RibbonGroup key={group.title}>
                <RibbonButtons>
                  {group.buttons.map((b) => (
                    <RibbonButton key={b.label} $pad={group.pad}>
                      <Icon name={b.icon} />
                      {b.label}
                    </RibbonButton>
                  ))}
                </RibbonButtons>
                <RibbonCaption>{group.title}</RibbonCaption>
              </RibbonGroup>
            ))}
            <RibbonCollapse aria-label="Menüband minimieren">
              <Chevrons up light />
            </RibbonCollapse>
          </Ribbon>
        </RibbonBack>

        <Workspace>
          <SideMenu />
          <Main>
            <DocTabs>
              <DocTab>
                Stammdaten
                <button aria-label="Stammdaten schließen">
                  <svg width="9" height="9" viewBox="0 0 9 9">
                    <path d="M1.500 1.500L7.500 7.500M7.500 1.500L1.500 7.500" stroke="#333333" strokeWidth="1.700" />
                  </svg>
                </button>
              </DocTab>
              <WindowList aria-label="Fensterliste">
                <svg width="8" height="4">
                  <path d="M0 0H8L4 4Z" fill="#222222" />
                </svg>
              </WindowList>
            </DocTabs>
            <DocFrame>
              <CatalogTabs>
                {catalogTabs.map((tab, i) => (
                  <CatalogTab key={tab} $active={i === 0}>
                    {tab}
                  </CatalogTab>
                ))}
              </CatalogTabs>
              <GridFrame>
                <GroupPanel>
                  <Swoosh width="330" height="36" aria-hidden="true">
                    <path d="M0 0H320C230 4 130 16 70 36H0Z" fill="#616161" />
                    <path d="M0 0H290C190 5 90 18 30 36H0Z" fill="#767676" />
                  </Swoosh>
                  <span>Ziehen Sie eine Spaltenüberschrift in diesen Bereich, um nach dieser zu gruppieren</span>
                  <button aria-label="Suchen">
                    <svg width="20" height="20" viewBox="0 0 20 20">
                      <circle cx="13" cy="7" r="5" fill="none" stroke="#000000" strokeWidth="2" />
                      <path d="M9.500 10.500L1.500 18.500" stroke="#000000" strokeWidth="2.500" />
                    </svg>
                  </button>
                </GroupPanel>
                <GridArea>
                  <GridScroll>
                    <CatalogTable />
                  </GridScroll>
                  <ScrollBar>
                    <ScrollCorner />
                    <ScrollArrow aria-label="Zeile nach oben">
                      <svg width="9" height="5">
                        <path d="M0 5L4.500 0L9 5Z" fill="#d8d8d8" />
                      </svg>
                    </ScrollArrow>
                    <ScrollThumb>
                      <svg width="9" height="8">
                        <path d="M0 0.500H9M0 2.500H9M0 4.500H9M0 6.500H9" stroke="#6d6d6d" />
                      </svg>
                    </ScrollThumb>
                    <ScrollArrow aria-label="Zeile nach unten">
                      <svg width="9" height="5">
                        <path d="M0 0L4.500 5L9 0Z" fill="#d8d8d8" />
                      </svg>
                    </ScrollArrow>
                  </ScrollBar>
                </GridArea>
              </GridFrame>
            </DocFrame>
          </Main>
        </Workspace>
      </Body>

      <StatusBar>
        {'Q-MATRIX (20.2.3.6) - Angemeldet: admin (Admin)  (c) Q-Ware GmbH'}
        <svg width="12" height="12" viewBox="0 0 12 12" aria-hidden="true">
          <path
            d="M9 1H11V3H9ZM5 5H7V7H5ZM9 5H11V7H9ZM1 9H3V11H1ZM5 9H7V11H5ZM9 9H11V11H9Z"
            fill="#d8d8d8"
            stroke="#000000"
            strokeWidth="0.500"
          />
        </svg>
      </StatusBar>
    </Window>
  </Page>
);

export default App;
